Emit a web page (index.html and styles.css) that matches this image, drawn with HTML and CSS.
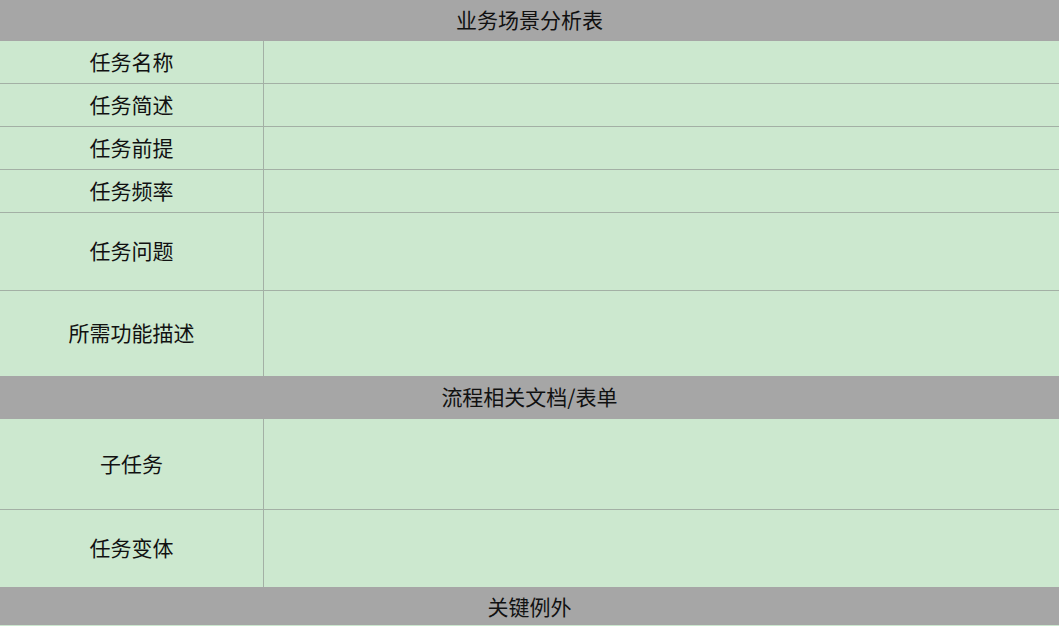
FILE: index.html
```html
<!DOCTYPE html>
<html lang="zh">
<head>
<meta charset="utf-8">
<link rel="stylesheet" href="styles.css">
</head>
<body>
<div class="sheet">
  <div class="band band-top">业务场景分析表</div>
  <div class="row h42"><div class="label">任务名称</div><div class="value"></div></div>
  <div class="row h42"><div class="label">任务简述</div><div class="value"></div></div>
  <div class="row h42"><div class="label">任务前提</div><div class="value"></div></div>
  <div class="row h42"><div class="label">任务频率</div><div class="value"></div></div>
  <div class="row h77"><div class="label">任务问题</div><div class="value"></div></div>
  <div class="row h85 last"><div class="label">所需功能描述</div><div class="value"></div></div>
  <div class="band band-mid">流程相关文档/表单</div>
  <div class="row h90"><div class="label">子任务</div><div class="value"></div></div>
  <div class="row h77 last"><div class="label">任务变体</div><div class="value"></div></div>
  <div class="band band-bottom">关键例外</div>
</div>
</body>
</html>
```
FILE: styles.css
```css
html, body {
  margin: 0;
  padding: 0;
  background: #cce8cf;
}
body {
  font-family: "Noto Sans CJK SC", "Noto Sans", sans-serif;
  color: #111;
  font-size: 21px;
  line-height: 1;
}
.sheet {
  display: flex;
  flex-direction: column;
  width: 1059px;
  height: 626px;
  overflow: hidden;
}
.band {
  background: #a6a6a6;
  display: flex;
  align-items: center;
  justify-content: center;
  flex: none;
  padding-bottom: 2px;
  box-sizing: border-box;
}
.band-top { height: 41px; }
.band-mid { height: 43px; }
.band-bottom { height: 38px; padding-bottom: 0; }
.row {
  display: grid;
  grid-template-columns: 264px 1fr;
  background: #cce8cf;
  border-bottom: 1px solid #a3b0a5;
  flex: none;
}
.row.last { border-bottom: none; }
.h42 { height: 42px; }
.h77 { height: 77px; }
.h85 { height: 85px; }
.h90 { height: 90px; }
.label {
  display: flex;
  align-items: center;
  justify-content: center;
  border-right: 1px solid #a3b0a5;
  padding-bottom: 2px;
}
```
